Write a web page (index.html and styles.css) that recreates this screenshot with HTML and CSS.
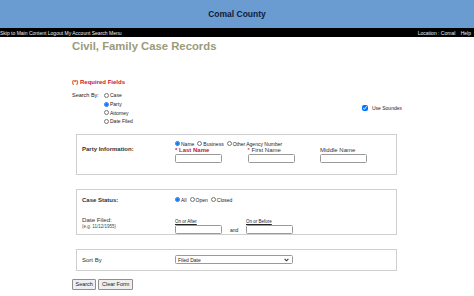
FILE: index.html
```html
<!DOCTYPE html>
<html lang="en">
<head>
    <meta charset="UTF-8">
    <meta name="viewport" content="width=device-width, initial-scale=1.0">
    <title>Comal County - Civil, Family Case Records</title>
    <link rel="stylesheet" href="styles.css">
</head>
<body>
    <div class="header">
        <h1>Comal County</h1>
    </div>
    <div class="nav">
        <div class="nav-links">
            <a href="#main">Skip to Main Content</a>
            <a href="#">Logout</a>
            <a href="#">My Account</a>
            <a href="#">Search Menu</a>
        </div>
        <div class="nav-right">
            <span>Location : Comal</span>
            <a href="#">Help</a>
        </div>
    </div>

    <div class="main" id="main">
        <h2 class="title">Civil, Family Case Records</h2>

        <p class="required">(*) Required Fields</p>

        <div class="search-row">
            <span class="search-label">Search By:</span>
            <div class="radio-list">
                <label><input type="radio" name="by"> Case</label>
                <label><input type="radio" name="by" checked> Party</label>
                <label><input type="radio" name="by"> Attorney</label>
                <label><input type="radio" name="by"> Date Filed</label>
            </div>
            <label class="soundex"><input type="checkbox" checked> Use Soundex</label>
        </div>

        <div class="box party-box">
            <div class="box-label">Party Information:</div>
            <div class="party-fields">
                <div class="radio-row">
                    <label><input type="radio" name="ptype" checked> Name</label>
                    <label><input type="radio" name="ptype"> Business</label>
                    <label><input type="radio" name="ptype"> Other Agency Number</label>
                </div>
                <div class="name-grid">
                    <div class="field">
                        <span class="req-label">* Last Name</span>
                        <input type="text" class="text-input">
                    </div>
                    <div class="field">
                        <span class="plain-label"><span class="star">*</span> First Name</span>
                        <input type="text" class="text-input">
                    </div>
                    <div class="field">
                        <span class="plain-label">Middle Name</span>
                        <input type="text" class="text-input">
                    </div>
                </div>
            </div>
        </div>

        <div class="box status-box">
            <div class="box-label">Case Status:</div>
            <div class="radio-row status-radios">
                <label><input type="radio" name="status" checked> All</label>
                <label><input type="radio" name="status"> Open</label>
                <label><input type="radio" name="status"> Closed</label>
            </div>
            <div class="date-label">
                <div class="box-label date-title">Date Filed:</div>
                <div class="hint">(e.g. 11/12/1955)</div>
            </div>
            <div class="date-fields">
                <div class="field">
                    <span class="small-label">On or After</span>
                    <input type="text" class="text-input">
                </div>
                <span class="and">and</span>
                <div class="field">
                    <span class="small-label">On or Before</span>
                    <input type="text" class="text-input">
                </div>
            </div>
        </div>

        <div class="box sort-box">
            <div class="box-label">Sort By</div>
            <div class="select-wrap">
                <select class="sort-select">
                    <option>Filed Date</option>
                    <option>Case Number</option>
                </select>
                <svg class="chevron" width="5" height="4" viewBox="0 0 5 4">
                    <path d="M0.6 0.8 L2.5 2.8 L4.4 0.8" fill="none" stroke="#333" stroke-width="1.1"/>
                </svg>
            </div>
        </div>

        <div class="buttons">
            <button class="btn">Search</button>
            <button class="btn">Clear Form</button>
        </div>
    </div>
</body>
</html>
```

FILE: styles.css
```css
body {
    margin: 0;
    font-family: "Liberation Sans", Arial, sans-serif;
    color: #222;
    background: #fff;
}

.header {
    height: 28px;
    background: #6a9bd1;
    display: flex;
    align-items: center;
    justify-content: center;
}

.header h1 {
    margin: 0;
    font-size: 8.5px;
    font-weight: bold;
    color: #0e1b3c;
}

.nav {
    height: 9px;
    background: #000;
    display: flex;
    justify-content: space-between;
    align-items: center;
    padding-right: 3px;
    font-size: 5px;
    color: #eee;
}

.nav a {
    color: #eee;
    text-decoration: none;
}

.nav-right span {
    margin-right: 4px;
}

.main {
    padding-left: 72px;
}

.title {
    margin: 3px 0 0;
    font-size: 11.3px;
    line-height: 13px;
    color: #9b9b7a;
}

.required {
    margin: 25px 0 0;
    font-size: 6px;
    line-height: 8px;
    font-weight: bold;
    color: #c8202c;
}

.search-row {
    display: flex;
    align-items: center;
    width: 330px;
    margin-top: 5px;
    font-size: 5px;
}

.search-label {
    width: 32px;
    align-self: flex-start;
    font-size: 5.5px;
    line-height: 8.7px;
}

.radio-list {
    display: flex;
    flex-direction: column;
}

.radio-list label {
    height: 8.7px;
    display: flex;
    align-items: center;
}

input[type="radio"],
input[type="checkbox"] {
    width: 5px;
    height: 5px;
    margin: 0 1px 0 0;
}

.soundex {
    margin-left: auto;
    display: flex;
    align-items: center;
}

.soundex input {
    width: 6px;
    height: 6px;
    margin-right: 4px;
}

.box {
    margin-left: 4px;
    width: 314px;
    border: 1px solid #cfcfcf;
    font-size: 5px;
}

.box-label {
    font-size: 6px;
    font-weight: bold;
    color: #333;
}

.party-box {
    margin-top: 8px;
    height: 39px;
    display: flex;
    padding-left: 5px;
    box-sizing: content-box;
}

.party-box > .box-label {
    width: 93px;
    padding-top: 11px;
}

.party-fields {
    padding-top: 6px;
}

.radio-row {
    display: flex;
    align-items: center;
    height: 6px;
}

.radio-row label {
    display: flex;
    align-items: center;
    margin-right: 3px;
}

.name-grid {
    display: grid;
    grid-template-columns: 72.5px 72.5px 72.5px;
}

.field {
    display: flex;
    flex-direction: column;
}

.req-label {
    font-size: 6px;
    line-height: 7px;
    color: #c8202c;
    font-weight: bold;
}

.plain-label {
    font-size: 6px;
    line-height: 7px;
    color: #333;
}

.star {
    color: #c8202c;
}

.text-input {
    width: 47px;
    height: 8.5px;
    box-sizing: border-box;
    border: 1px solid #9a9a9a;
    border-radius: 1.5px;
    padding: 0;
    margin: 0.5px 0 0;
}

.status-box {
    margin-top: 14px;
    height: 44px;
    display: grid;
    grid-template-columns: 93px auto;
    grid-template-rows: 14px auto;
    padding-left: 5px;
    box-sizing: content-box;
}

.status-box > .box-label {
    padding-top: 7px;
}

.status-radios {
    padding-top: 7px;
}

.date-label {
    padding-top: 12px;
}

.date-title {
    font-weight: normal;
    font-size: 6.2px;
}

.hint {
    font-size: 4.5px;
    line-height: 7px;
    color: #444;
}

.date-fields {
    display: flex;
    align-items: flex-end;
    padding-top: 4px;
}

.small-label {
    font-size: 4.5px;
    line-height: 6px;
    text-decoration: underline;
}

.and {
    width: 24px;
    padding-left: 8px;
    box-sizing: border-box;
    line-height: 8px;
    font-size: 5px;
}

.sort-box {
    margin-top: 14px;
    height: 20px;
    display: flex;
    align-items: center;
    padding-left: 5px;
    box-sizing: content-box;
}

.sort-box > .box-label {
    width: 93px;
    font-weight: normal;
    font-size: 6px;
}

.select-wrap {
    position: relative;
    width: 118px;
    height: 9px;
}

.sort-select {
    appearance: none;
    width: 118px;
    height: 9px;
    box-sizing: border-box;
    border: 1px solid #9a9a9a;
    border-radius: 1.5px;
    padding: 0 0 0 2px;
    font-family: inherit;
    font-size: 5px;
    background: #fff;
    color: #222;
}

.chevron {
    position: absolute;
    right: 4px;
    top: 2.5px;
}

.buttons {
    margin-top: 8px;
    display: flex;
    gap: 2px;
}

.btn {
    height: 11px;
    padding: 0 2.5px;
    font-family: inherit;
    font-size: 5.5px;
    background: #efefef;
    border: 1px solid #8f8f8f;
    border-radius: 1px;
    color: #222;
}
```
